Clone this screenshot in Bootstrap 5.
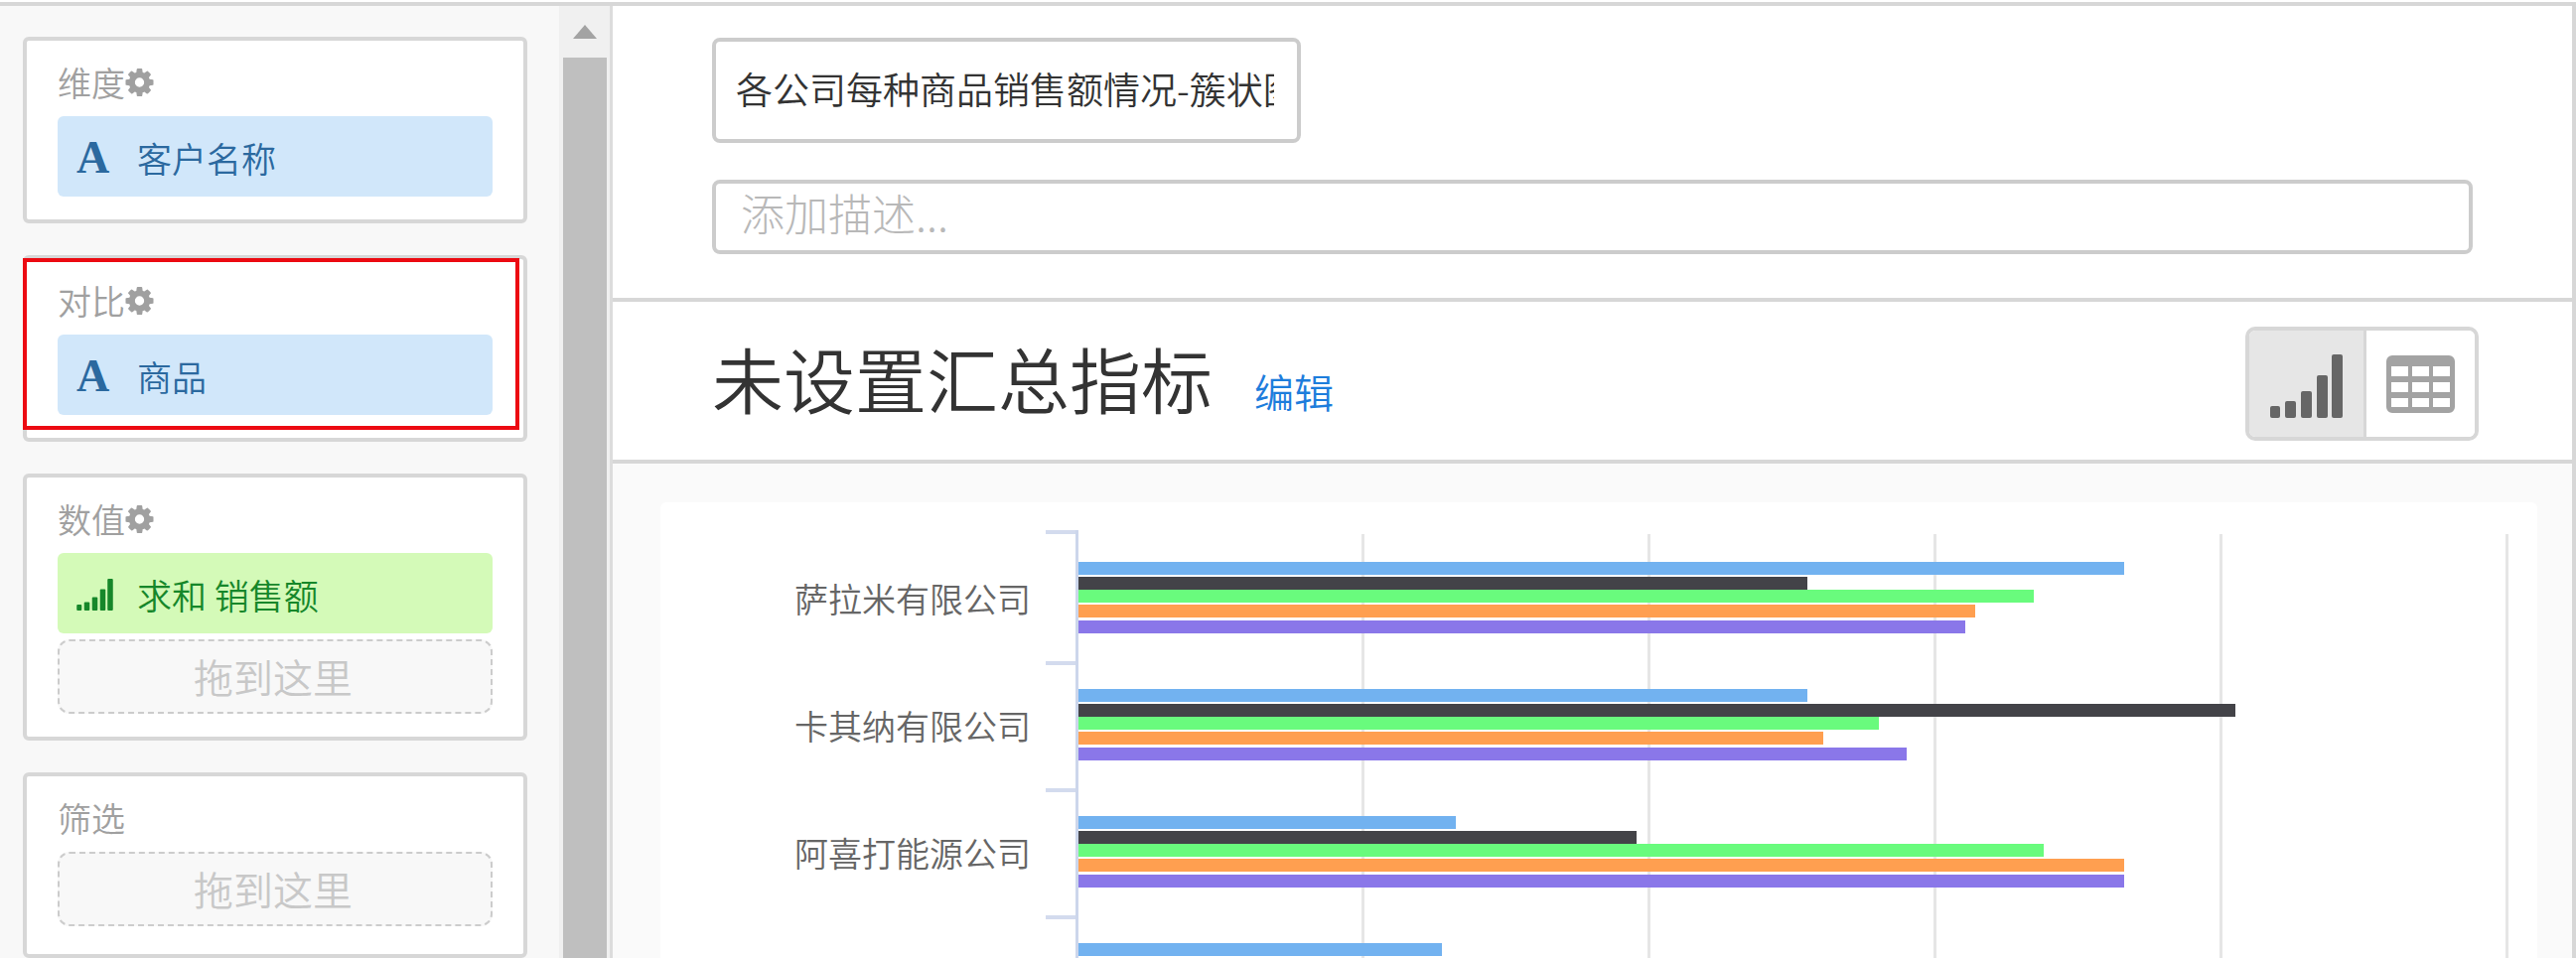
<!DOCTYPE html>
<html lang="zh-CN">
<head>
<meta charset="utf-8">
<meta name="viewport" content="width=device-width, initial-scale=1">
<title>图表编辑</title>
<link rel="stylesheet" href="https://cdn.jsdelivr.net/npm/bootstrap@5.3.0/dist/css/bootstrap.min.css">
<script src="https://cdn.jsdelivr.net/npm/bootstrap@5.3.0/dist/js/bootstrap.bundle.min.js"></script>
<style>
  :root { --line: #d7d7d7; }
  body { font-family: "Noto Sans CJK SC", "Liberation Sans", sans-serif; font-weight: 350; color: #333; background: #fff; line-height: 1.2; }
  .app { border-top: 4px solid var(--line); border-right: 4px solid var(--line); height: calc(100vh - 2px); margin-top: 2px; }

  .side { flex: 0 0 617px; background: #f8f8f8; border-right: 3px solid #dcdcdc; }
  .shelves { gap: 32px; padding: 31px 32px 0 23px; }
  .shelf { border: 4px solid var(--line); border-radius: 6px; padding: 21px 31px 23px; background: #fff; }
  .shelf:last-child { padding-bottom: 28px; }
  .shelf-title { font-size: 34px; line-height: 42px; color: #a0a0a0; margin-bottom: 13px; }
  .shelf-title button { color: #a0a0a0; line-height: 1; }
  .pill { height: 81px; border-radius: 6px; font-size: 35px; padding: 2px 19px 0; gap: 23px; }
  .pill-dim { background: #d1e7fa; color: #2b699f; }
  .pill-num { background: #d4fab8; color: #16872a; }
  .pill-icon { width: 38px; }
  .letter { font: bold 46px/1 "Liberation Serif", serif; }
  .drop { height: 75px; border: 2px dashed #ccc; border-radius: 12px; background: #f8f8f8; color: #c8c8c8; font-size: 40px; padding: 0 4px 2px 0; }
  .drop-next { margin-top: 6px; }
  .marked { position: absolute; top: -1px; left: -4px; right: 4px; bottom: 8px; border: 4px solid #ec0a12; pointer-events: none; }

  .track { width: 51px; background: #f0f0f0; }
  .track-up { height: 52px; }
  .thumb { width: 44px; background: #bfbfbf; }

  .names { padding: 32px 100px 44px; gap: 37px; border-bottom: 4px solid var(--line); }
  .box { border: 4px solid #ccc; border-radius: 8px; background: #fff; font-weight: 350; }
  .box::placeholder { color: #b8b8b8; opacity: 1; font-weight: 300; }
  .box-title { width: 593px; max-width: 100%; height: 106px; font-size: 37px; padding: 0 23px 4px 20px; color: #333; }
  .box-desc { height: 75px; font-size: 44px; padding: 0 25px 10px; }

  .summary { height: 163px; padding: 0 94px 0 100px; border-bottom: 4px solid var(--line); }
  .summary h1 { font-size: 72px; line-height: 100px; font-weight: 350; }
  .summary a { font-size: 40px; color: #1d7ddc; margin-left: 42px; }
  .views { width: 235px; height: 115px; border: 4px solid var(--line); border-radius: 10px; margin-top: 6px; }
  .views button { border: 0; background: #fff; padding: 0; }
  .views .active { flex: 0 0 118px; background: #e6e6e6; border-right: 3px solid var(--line); padding-top: 4px; }

  .canvas { background: #fafafa; padding: 39px 35px 0 48px; }
  .chart { background: #fff; border-radius: 6px; padding: 28px 29px 0 0; }
  .row-label { flex: 0 0 418px; font-size: 34px; color: #666; padding: 2px 45px 0 0; }
  .axis-start { height: 4px; }
  .cluster { height: 128px; padding: 28px 0; }
  .plot { border-left: 3px solid #ccd6eb; background: linear-gradient(to left, #e6e6e6 3px, transparent 3px) 0 0 / 20% 100%; }
  .axis-top { border-left: 3px solid #ccd6eb; }
  .tick { position: absolute; left: -33px; top: 100%; width: 30px; height: 4px; background: #d3dbee; }
  .tick-first { top: 0; }
  .bar { height: 13px; }
  .b1 { background: #72b2f0; margin-bottom: 2px; }
  .b2 { background: #434348; }
  .b3 { background: #69fb7d; margin-bottom: 2px; }
  .b4 { background: #ff9f50; margin-bottom: 3px; }
  .b5 { background: #8a77e9; }
</style>
</head>
<body class="overflow-hidden">
<svg class="d-none" xmlns="http://www.w3.org/2000/svg">
  <symbol id="gear" viewBox="0 0 1536 1536"><path d="M1024 768q0-106-75-181t-181-75-181 75-75 181 75 181 181 75 181-75 75-181zm512-109v222q0 12-8 23t-20 13l-185 28q-19 54-39 91 35 50 107 138 10 12 10 25t-9 23q-27 37-99 108t-94 71q-12 0-26-9l-138-108q-44 23-91 38-16 136-29 186-7 28-36 28h-222q-14 0-24.5-8.5t-11.5-21.5l-28-184q-49-16-90-37l-141 107q-10 9-25 9-14 0-25-11-126-114-165-168-7-10-7-23 0-12 8-23 15-21 51-66.5t54-70.5q-27-50-41-99l-183-27q-13-2-21-12.5t-8-23.5v-222q0-12 8-23t19-13l186-28q14-46 39-92-40-57-107-138-10-12-10-24 0-10 9-23 26-36 98.500-107.500t94.500-71.500q13 0 26 10l138 107q44-23 91-38 16-136 29-186 7-28 36-28h222q14 0 24.500 8.500t11.500 21.500l28 184q49 16 90 37l142-107q9-9 24-9 13 0 25 10 129 119 165 170 7 8 7 22 0 12-8 23-15 21-51 66.500t-54 70.500q26 50 41 98l183 28q13 2 21 12.500t8 23.500z"/></symbol>
  <symbol id="signal" viewBox="0 0 73 64"><rect x="0" y="52" width="10" height="12" rx="2"/><rect x="15" y="47" width="11" height="17" rx="2"/><rect x="31" y="37" width="11" height="27" rx="2"/><rect x="47" y="21" width="11" height="43" rx="2"/><rect x="62" y="0" width="11" height="64" rx="2"/></symbol>
  <symbol id="grid" viewBox="0 0 69 58"><path fill-rule="evenodd" d="M6 0h57a6 6 0 0 1 6 6v46a6 6 0 0 1-6 6H6a6 6 0 0 1-6-6V6a6 6 0 0 1 6-6zM5 11v10h17V11zm21 0v10h17V11zm21 0v10h17V11zM5 27v10h17V27zm21 0v10h17V27zm21 0v10h17V27zM5 43v9h17v-9zm21 0v9h17v-9zm21 0v9h17v-9z"/></symbol>
</svg>

<div class="app d-flex">
  <aside class="side d-flex overflow-hidden">
    <div class="shelves d-flex flex-column flex-grow-1">
      <section class="shelf flex-shrink-0">
        <div class="shelf-title d-flex align-items-center">维度<button type="button" class="btn p-0 border-0 d-flex" aria-label="维度设置"><svg width="29" height="28" fill="currentColor"><use href="#gear"/></svg></button></div>
        <div class="pill pill-dim d-flex align-items-center"><span class="pill-icon letter">A</span><span>客户名称</span></div>
      </section>
      <section class="shelf flex-shrink-0 position-relative">
        <div class="shelf-title d-flex align-items-center">对比<button type="button" class="btn p-0 border-0 d-flex" aria-label="对比设置"><svg width="29" height="28" fill="currentColor"><use href="#gear"/></svg></button></div>
        <div class="pill pill-dim d-flex align-items-center"><span class="pill-icon letter">A</span><span>商品</span></div>
        <div class="marked"></div>
      </section>
      <section class="shelf flex-shrink-0">
        <div class="shelf-title d-flex align-items-center">数值<button type="button" class="btn p-0 border-0 d-flex" aria-label="数值设置"><svg width="29" height="28" fill="currentColor"><use href="#gear"/></svg></button></div>
        <div class="pill pill-num d-flex align-items-center"><span class="pill-icon d-flex"><svg width="37" height="32" fill="currentColor"><use href="#signal"/></svg></span><span>求和 销售额</span></div>
        <div class="drop drop-next d-flex align-items-center justify-content-center">拖到这里</div>
      </section>
      <section class="shelf flex-shrink-0">
        <div class="shelf-title">筛选</div>
        <div class="drop d-flex align-items-center justify-content-center">拖到这里</div>
      </section>
    </div>
    <div class="track d-flex flex-column align-items-center flex-shrink-0">
      <div class="track-up d-flex align-items-center justify-content-center flex-shrink-0"><svg width="24" height="14" fill="#a3a3a3"><path d="M12 0l12 14H0z"/></svg></div>
      <div class="thumb flex-grow-1"></div>
    </div>
  </aside>

  <main class="flex-grow-1 d-flex flex-column overflow-hidden">
    <form class="names d-flex flex-column align-items-start flex-shrink-0">
      <input class="box box-title" type="text" aria-label="图表名称" value="各公司每种商品销售额情况-簇状图">
      <input class="box box-desc w-100" type="text" aria-label="描述" placeholder="添加描述...">
    </form>

    <div class="summary d-flex align-items-center justify-content-between flex-shrink-0">
      <div class="d-flex align-items-baseline pb-2">
        <h1 class="m-0">未设置汇总指标</h1>
        <a href="#" class="text-decoration-none">编辑</a>
      </div>
      <div class="views d-flex overflow-hidden" role="group" aria-label="视图">
        <button type="button" class="active d-flex align-items-center justify-content-center" aria-label="图表"><svg width="73" height="64" fill="#666"><use href="#signal"/></svg></button>
        <button type="button" class="flex-grow-1 d-flex align-items-center justify-content-center" aria-label="表格"><svg width="69" height="58" fill="#a3a3a3"><use href="#grid"/></svg></button>
      </div>
    </div>

    <div class="canvas flex-grow-1 overflow-hidden">
      <div class="chart">
        <div class="d-flex">
          <div class="row-label"></div>
          <div class="axis-start axis-top position-relative flex-grow-1"><span class="tick tick-first"></span></div>
        </div>
        <div class="d-flex">
          <div class="row-label d-flex align-items-center justify-content-end">萨拉米有限公司</div>
          <div class="plot cluster position-relative flex-grow-1">
            <div class="bar b1" style="width:73.1%"></div>
            <div class="bar b2" style="width:51%"></div>
            <div class="bar b3" style="width:66.8%"></div>
            <div class="bar b4" style="width:62.7%"></div>
            <div class="bar b5" style="width:62%"></div>
            <span class="tick"></span>
          </div>
        </div>
        <div class="d-flex">
          <div class="row-label d-flex align-items-center justify-content-end">卡其纳有限公司</div>
          <div class="plot cluster position-relative flex-grow-1">
            <div class="bar b1" style="width:51%"></div>
            <div class="bar b2" style="width:80.9%"></div>
            <div class="bar b3" style="width:56%"></div>
            <div class="bar b4" style="width:52.1%"></div>
            <div class="bar b5" style="width:57.9%"></div>
            <span class="tick"></span>
          </div>
        </div>
        <div class="d-flex">
          <div class="row-label d-flex align-items-center justify-content-end">阿喜打能源公司</div>
          <div class="plot cluster position-relative flex-grow-1">
            <div class="bar b1" style="width:26.4%"></div>
            <div class="bar b2" style="width:39%"></div>
            <div class="bar b3" style="width:67.5%"></div>
            <div class="bar b4" style="width:73.1%"></div>
            <div class="bar b5" style="width:73.1%"></div>
            <span class="tick"></span>
          </div>
        </div>
        <div class="d-flex">
          <div class="row-label"></div>
          <div class="plot cluster position-relative flex-grow-1">
            <div class="bar b1" style="width:25.4%"></div>
          </div>
        </div>
      </div>
    </div>
  </main>
</div>
</body>
</html>
